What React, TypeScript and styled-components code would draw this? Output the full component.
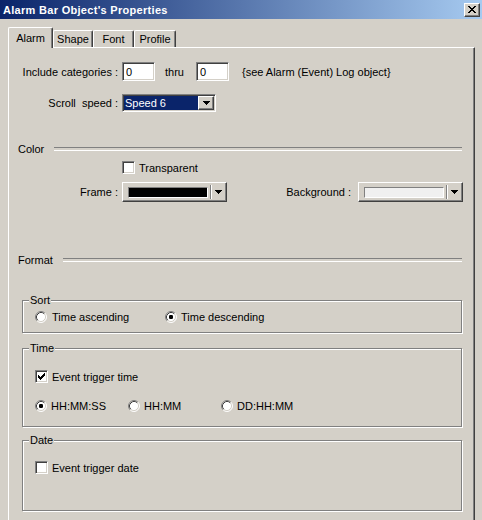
import React from "react";
import styled, { createGlobalStyle, css } from "styled-components";

const Global = createGlobalStyle`
  html, body { margin: 0; padding: 0; background: #d4d0c8; }
  body {
    font-family: "Liberation Sans", Arial, sans-serif;
    font-size: 11px;
    color: #000;
  }
  * { box-sizing: border-box; }
`;

const sunken = css`
  border-style: solid;
  border-width: 1px;
  border-color: #808080 #ffffff #ffffff #808080;
  box-shadow: inset 1px 1px 0 #404040, inset -1px -1px 0 #d4d0c8;
`;

const raised = css`
  border-style: solid;
  border-width: 1px;
  border-color: #ffffff #404040 #404040 #ffffff;
  box-shadow: inset -1px -1px 0 #808080;
`;

const Window = styled.div`
  width: 482px;
  height: 520px;
  background: #d4d0c8;
  overflow: hidden;
  display: flex;
  flex-direction: column;
`;

const TitleBar = styled.div`
  height: 19px;
  flex: none;
  display: flex;
  align-items: center;
  justify-content: space-between;
  padding: 0 2px 0 3px;
  background: linear-gradient(to right, #0a246a 0%, #a6caf0 100%);
`;

const TitleText = styled.span`
  color: #fff;
  font-weight: bold;
  font-size: 11px;
  letter-spacing: 0.3px;
`;

const CaptionButton = styled.div`
  width: 16px;
  height: 14px;
  background: #d4d0c8;
  ${raised};
  display: flex;
  align-items: center;
  justify-content: center;
  padding-bottom: 1px;
`;

const Body = styled.div`
  flex: 1;
  display: flex;
  flex-direction: column;
  padding: 8px 7px 0 8px;
  min-height: 0;
`;

const TabStrip = styled.div`
  display: flex;
  align-items: flex-end;
  height: 21px;
  margin-bottom: -1px;
  position: relative;
  z-index: 1;
  flex: none;
`;

const Tab = styled.div<{ $active?: boolean; $w: number }>`
  width: ${(p) => p.$w}px;
  height: ${(p) => (p.$active ? 21 : 17)}px;
  margin-bottom: ${(p) => (p.$active ? 0 : 1)}px;
  background: #d4d0c8;
  border-left: 1px solid #fff;
  border-top: 1px solid #fff;
  border-right: 1px solid #404040;
  box-shadow: inset -1px 0 0 #808080;
  border-top-left-radius: 2px;
  border-top-right-radius: 2px;
  display: flex;
  align-items: center;
  justify-content: center;
  flex: none;
`;

const Panel = styled.div`
  flex: 1;
  display: flex;
  flex-direction: column;
  border-top: 1px solid #fff;
  border-left: 1px solid #fff;
  border-right: 1px solid #404040;
  box-shadow: inset -1px 0 0 #808080;
`;

const FormRow = styled.div<{ $mt: number; $h: number; $pl?: number }>`
  display: flex;
  align-items: center;
  margin-top: ${(p) => p.$mt}px;
  height: ${(p) => p.$h}px;
  padding-left: ${(p) => p.$pl ?? 0}px;
  flex: none;
`;

const SplitRow = styled(FormRow)`
  justify-content: space-between;
  padding-right: 11px;
`;

const Pair = styled.div`
  display: flex;
  align-items: center;
`;

const FieldLabel = styled.span`
  width: 109px;
  margin-right: 4px;
  text-align: right;
  white-space: pre;
  flex: none;
`;

const SideLabel = styled.span`
  margin-right: 7px;
  white-space: pre;
`;

const InlineText = styled.span<{ $ml: number }>`
  margin-left: ${(p) => p.$ml}px;
  white-space: pre;
`;

const TextBox = styled.input<{ $ml?: number }>`
  width: 33px;
  height: 19px;
  margin: 0 0 0 ${(p) => p.$ml ?? 0}px;
  padding: 0 0 0 3px;
  background: #fff;
  font: inherit;
  color: #000;
  outline: none;
  ${sunken};
`;

const SelectBox = styled.div`
  width: 94px;
  height: 18px;
  padding: 1px;
  background: #fff;
  display: flex;
  ${sunken};
`;

const SelectValue = styled.div`
  flex: 1;
  background: #0a246a;
  color: #fff;
  padding-left: 1px;
  display: flex;
  align-items: center;
`;

const DropButton = styled.div`
  width: 16px;
  background: #d4d0c8;
  ${raised};
  display: flex;
  align-items: center;
  justify-content: center;
`;

const SectionHeader = styled.div<{ $mt: number }>`
  display: flex;
  align-items: center;
  height: 12px;
  margin-top: ${(p) => p.$mt}px;
  padding-left: 9px;
  margin-right: 12px;
  flex: none;
  &::after {
    content: "";
    flex: 1;
    height: 2px;
    margin-left: 10px;
    border-top: 1px solid #808080;
    border-bottom: 1px solid #fff;
  }
`;

const CheckBoxBox = styled.span`
  width: 13px;
  height: 13px;
  background: #fff;
  flex: none;
  display: flex;
  align-items: center;
  justify-content: center;
  ${sunken};
`;

const OptionText = styled.span<{ $gap: number }>`
  margin-left: ${(p) => p.$gap}px;
  white-space: pre;
`;

const ColorCombo = styled.div`
  width: 105px;
  height: 20px;
  background: #d4d0c8;
  display: flex;
  align-items: center;
  ${raised};
`;

const Swatch = styled.span<{ $color: string }>`
  width: 80px;
  height: 11px;
  margin-left: 5px;
  background: ${(p) => p.$color};
  border-style: solid;
  border-width: 1px;
  border-color: #808080 #fff #fff #808080;
  flex: none;
`;

const ComboSep = styled.span`
  width: 2px;
  height: 14px;
  margin-left: 2px;
  border-left: 1px solid #808080;
  border-right: 1px solid #fff;
  flex: none;
`;

const ComboArrow = styled.span`
  flex: 1;
  display: flex;
  align-items: center;
  justify-content: center;
  padding-right: 1px;
`;

const Group = styled.div<{ $mt: number; $h: number; $pt: number }>`
  position: relative;
  margin: ${(p) => p.$mt}px 12px 0 13px;
  height: ${(p) => p.$h}px;
  padding: ${(p) => p.$pt}px 0 0 12px;
  border: 1px solid #808080;
  box-shadow: inset 1px 1px 0 #fff, 1px 1px 0 #fff;
  flex: none;
  display: flex;
  flex-direction: column;
`;

const Legend = styled.span`
  position: absolute;
  top: -7px;
  left: 6px;
  padding: 0 1px;
  line-height: 13px;
  background: #d4d0c8;
`;

const OptionRow = styled.div<{ $mt?: number }>`
  display: flex;
  align-items: center;
  height: 13px;
  margin-top: ${(p) => p.$mt ?? 0}px;
`;

const OptionItem = styled.label<{ $w?: number }>`
  display: flex;
  align-items: center;
  width: ${(p) => (p.$w ? `${p.$w}px` : "auto")};
  flex: none;
`;

const ArrowGlyph = () => (
  <svg width="7" height="4" viewBox="0 0 7 4">
    <path d="M0 0h7v1h-1v1h-1v1h-1v1h-1v-1h-1v-1h-1v-1h-1z" fill="#000" />
  </svg>
);

const CloseGlyph = () => {
  const rects = [];
  for (let r = 0; r < 7; r++) {
    const d = r <= 3 ? r : 6 - r;
    rects.push(<rect key={`a${r}`} x={d} y={r} width={2} height={1} />);
    rects.push(<rect key={`b${r}`} x={6 - d} y={r} width={2} height={1} />);
  }
  return (
    <svg width="8" height="7" viewBox="0 0 8 7" fill="#000">
      {rects}
    </svg>
  );
};

const CheckGlyph = () => {
  const starts = [2, 3, 4, 3, 2, 1, 0];
  return (
    <svg width="7" height="7" viewBox="0 0 7 7" fill="#000">
      {starts.map((s, i) => (
        <rect key={i} x={i} y={s} width={1} height={3} />
      ))}
    </svg>
  );
};

const CheckBox = ({ checked }: { checked?: boolean }) => (
  <CheckBoxBox>{checked ? <CheckGlyph /> : null}</CheckBoxBox>
);

const Radio = ({ checked }: { checked?: boolean }) => (
  <svg width="12" height="12" viewBox="0 0 12 12" style={{ flex: "none" }}>
    <circle cx="6" cy="6" r="5" fill="#fff" />
    <path d="M2.11 9.89A5.5 5.5 0 0 1 9.89 2.11" fill="none" stroke="#808080" strokeWidth="1" />
    <path d="M9.89 2.11A5.5 5.5 0 0 1 2.11 9.89" fill="none" stroke="#fff" strokeWidth="1" />
    <path d="M2.82 9.18A4.5 4.5 0 0 1 9.18 2.82" fill="none" stroke="#404040" strokeWidth="1" />
    <path d="M9.18 2.82A4.5 4.5 0 0 1 2.82 9.18" fill="none" stroke="#d4d0c8" strokeWidth="1" />
    {checked ? <rect x="4" y="4" width="4" height="4" rx="1.2" fill="#000" /> : null}
  </svg>
);

export default function App() {
  return (
    <>
      <Global />
      <Window>
        <TitleBar>
          <TitleText>Alarm Bar Object's Properties</TitleText>
          <CaptionButton aria-label="Close">
            <CloseGlyph />
          </CaptionButton>
        </TitleBar>
        <Body>
          <TabStrip>
            <Tab $active $w={45}>Alarm</Tab>
            <Tab $w={40}>Shape</Tab>
            <Tab $w={41}>Font</Tab>
            <Tab $w={42}>Profile</Tab>
          </TabStrip>
          <Panel>
            <FormRow $mt={14} $h={19}>
              <FieldLabel>Include categories :</FieldLabel>
              <TextBox readOnly value="0" />
              <InlineText $ml={10}>thru</InlineText>
              <TextBox readOnly value="0" $ml={12} />
              <InlineText $ml={13}>{"{see Alarm (Event) Log object}"}</InlineText>
            </FormRow>
            <FormRow $mt={13} $h={18}>
              <FieldLabel>{"Scroll  speed :"}</FieldLabel>
              <SelectBox>
                <SelectValue>Speed 6</SelectValue>
                <DropButton>
                  <ArrowGlyph />
                </DropButton>
              </SelectBox>
            </FormRow>

            <SectionHeader $mt={31}>Color</SectionHeader>
            <FormRow $mt={6} $h={13} $pl={113}>
              <CheckBox />
              <OptionText $gap={4}>Transparent</OptionText>
            </FormRow>
            <SplitRow $mt={8} $h={20}>
              <Pair>
                <FieldLabel>Frame :</FieldLabel>
                <ColorCombo>
                  <Swatch $color="#000000" />
                  <ComboSep />
                  <ComboArrow>
                    <ArrowGlyph />
                  </ComboArrow>
                </ColorCombo>
              </Pair>
              <Pair>
                <SideLabel>Background :</SideLabel>
                <ColorCombo>
                  <Swatch $color="#f0f0f0" />
                  <ComboSep />
                  <ComboArrow>
                    <ArrowGlyph />
                  </ComboArrow>
                </ColorCombo>
              </Pair>
            </SplitRow>

            <SectionHeader $mt={52}>Format</SectionHeader>

            <Group $mt={34} $h={33} $pt={9}>
              <Legend>Sort</Legend>
              <OptionRow>
                <OptionItem $w={130}>
                  <Radio />
                  <OptionText $gap={5}>Time ascending</OptionText>
                </OptionItem>
                <OptionItem>
                  <Radio checked />
                  <OptionText $gap={4}>Time descending</OptionText>
                </OptionItem>
              </OptionRow>
            </Group>

            <Group $mt={15} $h={79} $pt={21}>
              <Legend>Time</Legend>
              <OptionRow>
                <OptionItem>
                  <CheckBox checked />
                  <OptionText $gap={4}>Event trigger time</OptionText>
                </OptionItem>
              </OptionRow>
              <OptionRow $mt={16}>
                <OptionItem $w={93}>
                  <Radio checked />
                  <OptionText $gap={4}>HH:MM:SS</OptionText>
                </OptionItem>
                <OptionItem $w={93}>
                  <Radio />
                  <OptionText $gap={4}>HH:MM</OptionText>
                </OptionItem>
                <OptionItem>
                  <Radio />
                  <OptionText $gap={4}>DD:HH:MM</OptionText>
                </OptionItem>
              </OptionRow>
            </Group>

            <Group $mt={13} $h={71} $pt={20}>
              <Legend>Date</Legend>
              <OptionRow>
                <OptionItem>
                  <CheckBox />
                  <OptionText $gap={4}>Event trigger date</OptionText>
                </OptionItem>
              </OptionRow>
            </Group>
          </Panel>
        </Body>
      </Window>
    </>
  );
}
